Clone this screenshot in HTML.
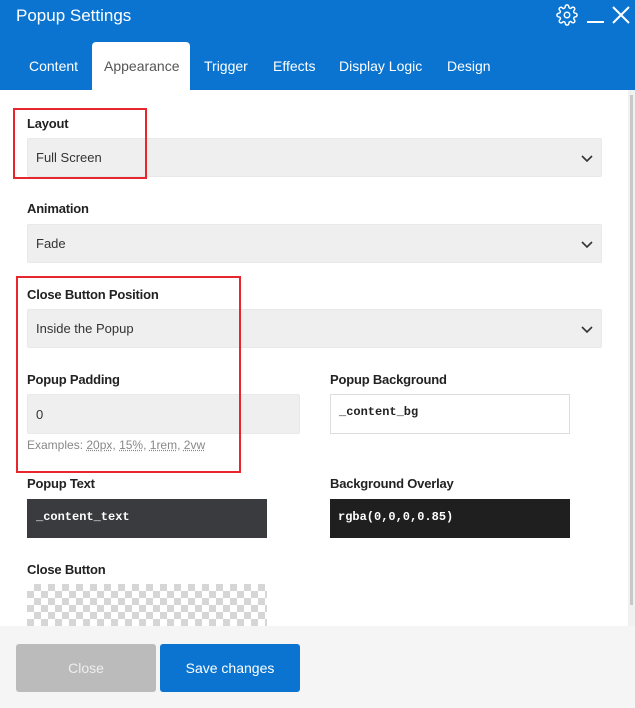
<!DOCTYPE html>
<html><head><meta charset="utf-8"><style>
*{box-sizing:border-box;margin:0;padding:0}
body{width:635px;height:708px;overflow:hidden;background:#fff;font-family:"Liberation Sans",sans-serif;position:relative}
.a{position:absolute}
.hdr{left:0;top:0;width:635px;height:90px;background:#0a74d0}
.lbl{font-size:13px;color:#222;font-weight:bold;letter-spacing:-0.2px}
.sel{background:#efefef;border:1px solid #e8e8e8;border-radius:2px;font-size:13px;color:#333;padding-left:8px;display:flex;align-items:center}
.chev{position:absolute;right:8px;top:50%;margin-top:-5px}
.tab{color:#fff;font-size:14px;top:58px}
.mono{font-family:"Liberation Mono",monospace;font-weight:bold;font-size:12px}
.red{border:2px solid #e8262e}
</style></head><body>
<div class="a hdr"></div>
<div class="a" style="left:16px;top:6px;color:#fff;font-size:17px">Popup Settings</div>
<svg class="a" style="left:556px;top:4px" width="22" height="22" viewBox="0 0 24 24" fill="none" stroke="#fff" stroke-width="1.6"><circle cx="12" cy="12" r="3"/><path d="M19.4 15a1.7 1.7 0 0 0 .3 1.8l.1.1a2 2 0 1 1-2.8 2.8l-.1-.1a1.7 1.7 0 0 0-1.8-.3 1.7 1.7 0 0 0-1 1.5V21a2 2 0 1 1-4 0v-.1a1.7 1.7 0 0 0-1.1-1.5 1.7 1.7 0 0 0-1.8.3l-.1.1a2 2 0 1 1-2.8-2.8l.1-.1a1.7 1.7 0 0 0 .3-1.8 1.7 1.7 0 0 0-1.5-1H3a2 2 0 1 1 0-4h.1a1.7 1.7 0 0 0 1.5-1.1 1.7 1.7 0 0 0-.3-1.8l-.1-.1a2 2 0 1 1 2.8-2.8l.1.1a1.7 1.7 0 0 0 1.8.3H9a1.7 1.7 0 0 0 1-1.5V3a2 2 0 1 1 4 0v.1a1.7 1.7 0 0 0 1 1.5 1.7 1.7 0 0 0 1.8-.3l.1-.1a2 2 0 1 1 2.8 2.8l-.1.1a1.7 1.7 0 0 0-.3 1.8V9a1.7 1.7 0 0 0 1.5 1H21a2 2 0 1 1 0 4h-.1a1.7 1.7 0 0 0-1.5 1z"/></svg>
<div class="a" style="left:587px;top:21px;width:17px;height:2px;background:#fff"></div>
<svg class="a" style="left:611px;top:5px" width="20" height="20" viewBox="0 0 20 20" stroke="#fff" stroke-width="2"><path d="M2 2L18 18M18 2L2 18"/></svg>
<div class="a" style="left:92px;top:42px;width:98px;height:48px;background:#fff;border-radius:4px 4px 0 0"></div>
<div class="a tab" style="left:29px">Content</div>
<div class="a tab" style="left:104px;color:#555">Appearance</div>
<div class="a tab" style="left:204px">Trigger</div>
<div class="a tab" style="left:273px">Effects</div>
<div class="a tab" style="left:339px">Display Logic</div>
<div class="a tab" style="left:447px">Design</div>
<div class="a" style="left:628px;top:90px;width:7px;height:536px;background:#f1f1f1"></div>
<div class="a" style="left:630px;top:95px;width:3px;height:510px;background:#c8c8c8"></div>

<div class="a lbl" style="left:27px;top:116px">Layout</div>
<div class="a sel" style="left:27px;top:138px;width:575px;height:39px">Full Screen<svg class="chev" width="12" height="10" viewBox="0 0 12 10"><path d="M1 3l5 5 5-5" fill="none" stroke="#333" stroke-width="1.6"/></svg></div>
<div class="a lbl" style="left:27px;top:201px">Animation</div>
<div class="a sel" style="left:27px;top:224px;width:575px;height:39px">Fade<svg class="chev" width="12" height="10" viewBox="0 0 12 10"><path d="M1 3l5 5 5-5" fill="none" stroke="#333" stroke-width="1.6"/></svg></div>
<div class="a lbl" style="left:27px;top:287px">Close Button Position</div>
<div class="a sel" style="left:27px;top:309px;width:575px;height:39px">Inside the Popup<svg class="chev" width="12" height="10" viewBox="0 0 12 10"><path d="M1 3l5 5 5-5" fill="none" stroke="#333" stroke-width="1.6"/></svg></div>
<div class="a lbl" style="left:27px;top:372px">Popup Padding</div>
<div class="a sel" style="left:27px;top:394px;width:273px;height:40px">0</div>
<div class="a" style="left:27px;top:438px;font-size:12px;color:#888">Examples: <u style="text-decoration:underline dotted">20px</u>, <u style="text-decoration:underline dotted">15%</u>, <u style="text-decoration:underline dotted">1rem</u>, <u style="text-decoration:underline dotted">2vw</u></div>
<div class="a lbl" style="left:330px;top:372px">Popup Background</div>
<div class="a mono" style="left:330px;top:394px;width:240px;height:40px;border:1px solid #ddd;padding:10px 8px;color:#222">_content_bg</div>
<div class="a lbl" style="left:27px;top:476px">Popup Text</div>
<div class="a mono" style="left:27px;top:499px;width:240px;height:39px;background:#3a3b3f;color:#fff;padding:11px 9px">_content_text</div>
<div class="a lbl" style="left:330px;top:476px">Background Overlay</div>
<div class="a mono" style="left:330px;top:499px;width:240px;height:39px;background:#1f1f1f;color:#fff;padding:11px 8px">rgba(0,0,0,0.85)</div>
<div class="a lbl" style="left:27px;top:562px">Close Button</div>
<div class="a" style="left:27px;top:584px;width:240px;height:42px;background-color:#fff;background-image:linear-gradient(45deg,#d6d6d6 25%,transparent 25%,transparent 75%,#d6d6d6 75%),linear-gradient(45deg,#d6d6d6 25%,transparent 25%,transparent 75%,#d6d6d6 75%);background-size:14px 14px;background-position:0 0,7px 7px"></div>

<div class="a" style="left:0;top:626px;width:635px;height:82px;background:#f5f5f5"></div>
<div class="a" style="left:16px;top:644px;width:140px;height:48px;background:#bbb;border-radius:3px;color:#eee;font-size:14px;display:flex;align-items:center;justify-content:center">Close</div>
<div class="a" style="left:160px;top:644px;width:140px;height:48px;background:#0a74d0;border-radius:3px;color:#fff;font-size:14px;display:flex;align-items:center;justify-content:center">Save changes</div>

<div class="a red" style="left:13px;top:108px;width:134px;height:71px"></div>
<div class="a red" style="left:16px;top:276px;width:225px;height:197px"></div>
</body></html>
